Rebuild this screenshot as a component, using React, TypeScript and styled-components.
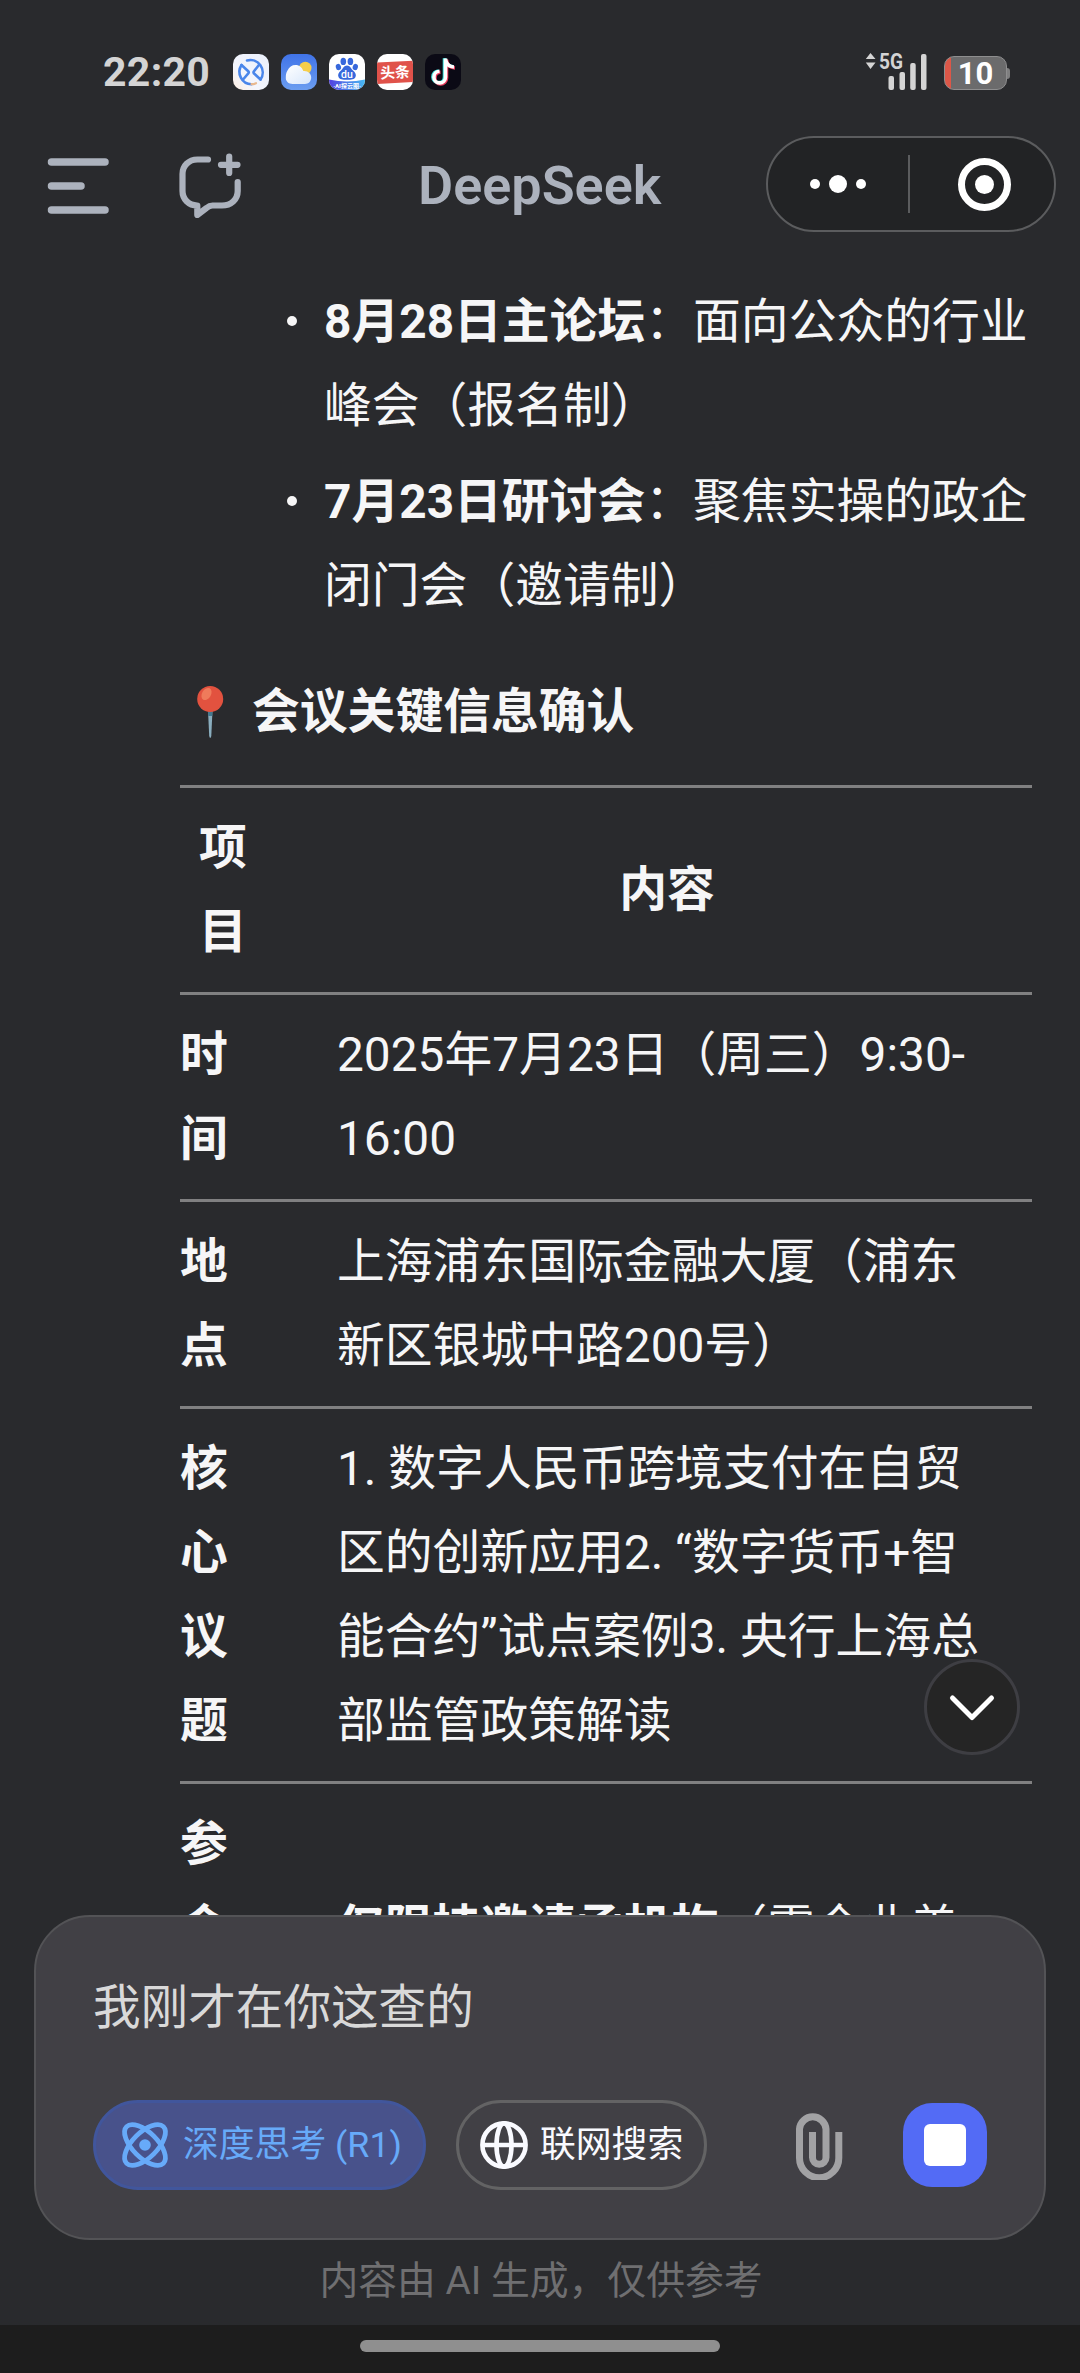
import React from 'react';
import styled, { createGlobalStyle, css } from 'styled-components';

const Global = createGlobalStyle`
  * { box-sizing: border-box; }
  html, body { margin: 0; padding: 0; background: #292a2d; }
  body { font-family: Roboto, "Noto Sans CJK SC", sans-serif; color: #f6f6f7; }
`;

const Screen = styled.div`
  width: 1080px;
  height: 2373px;
  background: #292a2d;
  display: flex;
  flex-direction: column;
  overflow: hidden;
`;

const StatusBar = styled.div`
  flex: none;
  height: 120px;
  padding: 0 70px 0 103px;
  display: flex;
  align-items: flex-start;
`;
const Clock = styled.div`
  width: 130px;
  padding-top: 50px;
  font: 700 41px/44px Roboto, sans-serif;
  letter-spacing: 0.3px;
  color: #d4d4d4;
`;
const AppIcons = styled.div`
  display: flex;
  gap: 12px;
  padding-top: 54px;
  flex: 1;
`;
const AppIcon = styled.svg`
  width: 36px;
  height: 36px;
  border-radius: 10px;
  display: block;
`;
const Signal = styled.svg`
  width: 64px;
  height: 40px;
  margin: 52px 15px 0 0;
  display: block;
  overflow: visible;
`;
const BatteryWrap = styled.div`
  display: flex;
  align-items: center;
  padding-top: 56px;
`;
const Battery = styled.div`
  width: 63px;
  height: 34px;
  border: 1.5px solid #8e8e8f;
  border-radius: 10px;
  background: linear-gradient(90deg, #dc5748 0 6px, #6b6b6c 6px);
  color: #fff;
  text-align: center;
  font: 700 31px/33px Roboto, sans-serif;
`;
const BatteryTip = styled.div`
  width: 3px;
  height: 11px;
  border-radius: 0 3px 3px 0;
  background: #7f7f80;
`;

const Header = styled.header`
  flex: none;
  height: 128px;
  padding: 16px 24px 0 44px;
  display: grid;
  grid-template-columns: 132px 200px 1fr 290px;
  align-items: start;
`;
const HeaderIcon = styled.svg`
  width: 72px;
  height: 96px;
  display: block;
  stroke: #acb2bd;
  fill: none;
  stroke-linecap: round;
  stroke-linejoin: round;
`;
const Title = styled.h1`
  margin: 0;
  padding-left: 42px;
  font: 600 54px/99px Roboto, sans-serif;
  color: #acb2bd;
  white-space: nowrap;
`;
const Capsule = styled.div`
  height: 96px;
  border: 2px solid #5b5c5e;
  border-radius: 48px;
  background: #222325;
  display: flex;
  align-items: center;
`;
const CapsuleHalf = styled.div<{ $shift?: number }>`
  flex: 1;
  display: flex;
  justify-content: center;
  align-items: center;
  gap: 9px;
  padding-left: ${p => p.$shift ?? 0}px;
`;
const Dot = styled.i<{ $size: number }>`
  width: ${p => p.$size}px;
  height: ${p => p.$size}px;
  border-radius: 50%;
  background: #fff;
`;
const Divider = styled.i`
  width: 2px;
  height: 58px;
  background: #5b5c5e;
`;
const Ring = styled.div`
  width: 53px;
  height: 53px;
  border: 7px solid #fff;
  border-radius: 50%;
  display: flex;
  align-items: center;
  justify-content: center;
`;

const Chat = styled.main`
  position: relative;
  flex: none;
  height: 1667px;
  overflow: hidden;
  padding: 32px 48px 0 180px;
  font-size: 47.8px;
  line-height: 84px;
`;
const List = styled.ul`
  list-style: none;
  margin: 0 0 42px;
  padding: 0 0 0 107px;
  display: flex;
  flex-direction: column;
  gap: 12px;
`;
const Item = styled.li`
  display: flex;
  margin-right: -8px;
`;
const Bullet = styled.i`
  flex: none;
  width: 10px;
  height: 10px;
  margin: 36px 27px 0 0;
  border-radius: 50%;
  background: #f6f6f7;
`;
const Heading = styled.h2`
  margin: 0 0 31px;
  padding-left: 15px;
  display: flex;
  align-items: center;
  font-size: 47.8px;
  font-weight: 700;
`;
const Pin = styled.svg`
  width: 30px;
  height: 54px;
  margin-right: 27px;
`;
const Row = styled.div<{ $top?: boolean }>`
  display: grid;
  grid-template-columns: 48px 660px;
  column-gap: 109px;
  align-items: center;
  padding: 18px 0;
  border-top: 3px solid #808081;
  ${p => p.$top && css`
    padding-left: 19px;
    column-gap: 90px;
  `}
`;
const Key = styled.div`
  font-weight: 700;
  word-break: break-all;
`;
const Value = styled.div<{ $center?: boolean }>`
  ${p => p.$center && css`
    text-align: center;
    font-weight: 700;
  `}
`;
const ScrollDown = styled.button`
  position: absolute;
  left: 924px;
  top: 1411px;
  width: 96px;
  height: 96px;
  padding: 0;
  border: 3px solid #3e3e43;
  border-radius: 50%;
  background: #252525;
  display: flex;
  align-items: center;
  justify-content: center;
`;

const Composer = styled.section`
  flex: none;
  height: 325px;
  margin: 0 34px;
  padding: 51px 57px 0 57px;
  border: 2px solid #535356;
  border-radius: 56px;
  background: #414045;
`;
const Draft = styled.div`
  height: 84px;
  font-size: 47.6px;
  line-height: 80px;
  color: #d9d9d9;
`;
const Tools = styled.div`
  display: flex;
  align-items: center;
  margin-top: 48px;
`;
const Chip = styled.button<{ $active?: boolean }>`
  height: 90px;
  width: ${p => (p.$active ? 333 : 251)}px;
  margin-right: 30px;
  padding: 0 0 1px ${p => (p.$active ? 24 : 20)}px;
  display: flex;
  align-items: center;
  border: 3px solid ${p => (p.$active ? '#41569c' : '#636364')};
  border-radius: 45px;
  background: ${p => (p.$active ? '#48528b' : 'transparent')};
  color: ${p => (p.$active ? '#67aaf9' : '#f9faff')};
  font: 400 35.8px/50px Roboto, "Noto Sans CJK SC", sans-serif;
  white-space: nowrap;
  svg { flex: none; margin: 1px ${p => (p.$active ? 13 : 11)}px 0 0; }
`;
const Clip = styled.svg`
  width: 50px;
  height: 70px;
  margin: 0 59px 0 57px;
`;
const Stop = styled.button`
  width: 84px;
  height: 84px;
  padding: 0;
  border: 0;
  border-radius: 29px;
  background: #536bf5;
  display: flex;
  align-items: center;
  justify-content: center;
  &::before {
    content: "";
    width: 42px;
    height: 42px;
    border-radius: 6px;
    background: #fff;
  }
`;
const Note = styled.p`
  flex: none;
  height: 85px;
  margin: 0;
  padding-left: 2px;
  text-align: center;
  font-size: 38.800px;
  line-height: 82px;
  color: #6f6f71;
`;
const NavBar = styled.div`
  flex: none;
  height: 48px;
  background: #1d1d1d;
  display: flex;
  justify-content: center;
  padding-top: 15px;
`;
const Handle = styled.i`
  width: 360px;
  height: 12px;
  border-radius: 6px;
  background: #8f8f8f;
`;

const LinkIcon = () => (
  <AppIcon viewBox="0 0 36 36">
    <defs>
      <linearGradient id="lk" x1="0" y1="1" x2="1" y2="0">
        <stop offset="0" stopColor="#fdeee2" /><stop offset=".35" stopColor="#f4f6fd" /><stop offset="1" stopColor="#e9effb" />
      </linearGradient>
    </defs>
    <rect width="36" height="36" fill="url(#lk)" />
    <g fill="none" stroke="#4a86ea" strokeWidth="2.6" strokeLinecap="round" strokeLinejoin="round">
      <path d="M14 6.500A12.400 12.400 0 0 1 27.500 25.500" />
      <path d="M8.500 11A12.400 12.400 0 0 0 18.500 30.200" />
      <path d="M8.500 11L15.500 17.500Q16.200 18.200 15.500 19.200L10.500 25" />
      <path d="M25.500 11.500L20.800 17.500Q20.200 18.300 20.800 19.200L27.500 25.500" />
    </g>
    <path d="M18.500 30.200a12 12 0 0 0 4.500-1" fill="none" stroke="#e9b98f" strokeWidth="2.2" strokeLinecap="round" />
  </AppIcon>
);
const WeatherIcon = () => (
  <AppIcon viewBox="0 0 36 36">
    <defs>
      <linearGradient id="sky" x1="0" y1="0" x2="0" y2="1"><stop stopColor="#4073e8" /><stop offset="1" stopColor="#6b9df0" /></linearGradient>
      <linearGradient id="cl" x1="0" y1="0" x2="1" y2="1"><stop stopColor="#fff" /><stop offset="1" stopColor="#d7e6fb" /></linearGradient>
    </defs>
    <rect width="36" height="36" fill="url(#sky)" />
    <circle cx="24.3" cy="14" r="6.2" fill="#f6ce4b" />
    <path d="M11.500 30C7.500 30 4.800 27.200 4.800 24C4.800 21 5 18.700 6.500 16.500C8 13 11 11 14.500 11C18.500 11 21 13.500 22.300 17C27 16.500 30.200 19.800 30.200 23.500C30.200 27.200 27.500 30 24 30Z" fill="url(#cl)" />
  </AppIcon>
);
const BaiduIcon = () => (
  <AppIcon viewBox="0 0 36 36">
    <defs>
      <linearGradient id="bd" x1="0" y1="0" x2="1" y2="0"><stop stopColor="#5340e0" /><stop offset="1" stopColor="#47b9f2" /></linearGradient>
    </defs>
    <rect width="36" height="36" fill="#fff" />
    <path d="M0 25.500Q18 29.500 36 25.500V36H0Z" fill="url(#bd)" />
    <g fill="#3768dc">
      <ellipse cx="14.3" cy="7.400" rx="2.800" ry="3.700" />
      <ellipse cx="21.400" cy="7.400" rx="2.800" ry="3.700" />
      <ellipse cx="9.400" cy="13" rx="2.600" ry="3.200" transform="rotate(-15 9.400 13)" />
      <ellipse cx="26.300" cy="13" rx="2.600" ry="3.200" transform="rotate(15 26.300 13)" />
      <path d="M18 11.500C21 11.500 22 14.500 24 16.500C26.500 18.700 27.500 20.500 26.500 23C25.500 25.500 22.500 25.800 18 25.800S10.500 25.500 9.500 23C8.500 20.500 9.500 18.700 12 16.500C14 14.500 15 11.500 18 11.500Z" />
    </g>
    <text x="18" y="24" textAnchor="middle" fontFamily="Roboto" fontWeight="500" fontSize="10.500" fill="#fff">du</text>
    <text x="18" y="34" textAnchor="middle" fontFamily="Roboto, Noto Sans CJK SC" fontWeight="700" fontSize="6" fill="#fff">·AI探云图·</text>
  </AppIcon>
);
const ToutiaoIcon = () => (
  <AppIcon viewBox="0 0 36 36">
    <rect width="36" height="36" fill="#fff" />
    <path d="M0 8.500L36 6.800V28L0 30Z" fill="#e0524a" />
    <text x="18" y="23.800" textAnchor="middle" fontFamily="Noto Sans CJK SC" fontWeight="700" fontSize="14.800" fill="#fff" transform="rotate(-3 18 18)">头条</text>
  </AppIcon>
);
const notePath = 'M20.500 4.500V23.200A5.800 5.800 0 1 1 14.500 17.300M20.500 4.500C20.800 9.500 24 12.700 29 13';
const DouyinIcon = () => (
  <AppIcon viewBox="0 0 36 36">
    <rect width="36" height="36" fill="#0b0a15" />
    <g fill="none" strokeWidth="3.600">
      <path d={notePath} stroke="#3fe0dc" transform="translate(-1 -.3)" />
      <path d={notePath} stroke="#ea3a5c" transform="translate(1 1)" />
      <path d={notePath} stroke="#fff" />
    </g>
  </AppIcon>
);

const rows = [
  ['时间', '2025年7月23日（周三）9:30-16:00'],
  ['地点', '上海浦东国际金融大厦（浦东新区银城中路200号）'],
  ['核心议题', '1. 数字人民币跨境支付在自贸区的创新应用2. “数字货币+智能合约”试点案例3. 央行上海总部监管政策解读'],
];

export default function App() {
  return (
    <Screen>
      <Global />
      <StatusBar>
        <Clock>22:20</Clock>
        <AppIcons>
          <LinkIcon /><WeatherIcon /><BaiduIcon /><ToutiaoIcon /><DouyinIcon />
        </AppIcons>
        <Signal viewBox="0 0 64 40" fill="#d4d4d4">
          <path d="M5.500 1L10.500 7H.8ZM5.500 17L.8 10.500H10.500Z" />
          <text x="14" y="16.500" fontFamily="Roboto" fontWeight="700" fontSize="21.500" textLength="24" lengthAdjust="spacingAndGlyphs">5G</text>
          <rect x="23.500" y="24" width="5.500" height="14" rx="2" />
          <rect x="34.500" y="20" width="5.500" height="18" rx="2" />
          <rect x="45.200" y="11" width="5.500" height="27" rx="2" />
          <rect x="56" y="2" width="5.500" height="36" rx="2" />
        </Signal>
        <BatteryWrap><Battery>10</Battery><BatteryTip /></BatteryWrap>
      </StatusBar>
      <Header>
        <HeaderIcon viewBox="0 0 72 96" strokeWidth="7.500">
          <path d="M7.500 26H61M7.500 50H37M7.500 74H61" />
        </HeaderIcon>
        <HeaderIcon viewBox="0 0 72 96" strokeWidth="6.200">
          <path d="M32 23.500H21.500C12.500 23.500 6.500 30 6.500 38V55C6.500 63 12.500 69.500 21.300 69.500V79L30.500 72C32.500 70.300 34 69.500 36.500 69.500H46C55 69.500 61.700 63.500 61.700 55V46" />
          <path d="M53.200 20.500V37M45 28.800H61.500" />
        </HeaderIcon>
        <Title>DeepSeek</Title>
        <Capsule>
          <CapsuleHalf><Dot $size={10} /><Dot $size={18} /><Dot $size={10} /></CapsuleHalf>
          <Divider />
          <CapsuleHalf $shift={4}><Ring><Dot $size={19} /></Ring></CapsuleHalf>
        </Capsule>
      </Header>
      <Chat>
        <List>
          <Item><Bullet /><div><b>8月28日主论坛</b>：面向公众的行业峰会（报名制）</div></Item>
          <Item><Bullet /><div><b>7月23日研讨会</b>：聚焦实操的政企闭门会（邀请制）</div></Item>
        </List>
        <Heading>
          <Pin viewBox="0 0 30 54">
            <path d="M13 25H17.500L16.300 51Q15.200 55 14.200 51Z" fill="#8aaebf" />
            <path d="M13 25H17.500L17.300 31H13.200Z" fill="#45798f" />
            <circle cx="15.200" cy="14" r="13" fill="#e2523f" />
            <ellipse cx="11.500" cy="9" rx="4.500" ry="6.500" fill="#ef7b5b" transform="rotate(30 11.500 9)" />
          </Pin>
          会议关键信息确认
        </Heading>
        <Row $top><Key>项目</Key><Value $center>内容</Value></Row>
        {rows.map(([k, v]) => <Row key={k}><Key>{k}</Key><Value>{v}</Value></Row>)}
        <Row><Key>参会资格</Key><Value><b>仅限持邀请函机构</b>（需企业盖章）</Value></Row>
        <ScrollDown>
          <svg width="50" height="34" viewBox="0 0 50 34" fill="none" stroke="#fff" strokeWidth="5" strokeLinecap="round" strokeLinejoin="round">
            <path d="M5.500 8L25 27.500L44.500 8" />
          </svg>
        </ScrollDown>
      </Chat>
      <Composer>
        <Draft>我刚才在你这查的</Draft>
        <Tools>
          <Chip $active>
            <svg width="50" height="50" viewBox="0 0 50 50" fill="none" stroke="currentColor" strokeWidth="4.800">
              <ellipse cx="25" cy="25" rx="26" ry="12.500" transform="rotate(45 25 25)" />
              <ellipse cx="25" cy="25" rx="26" ry="12.500" transform="rotate(-45 25 25)" />
              <circle cx="25" cy="25" r="5.800" fill="currentColor" stroke="none" />
            </svg>
            深度思考 (R1)
          </Chip>
          <Chip>
            <svg width="50" height="50" viewBox="0 0 50 50" fill="none" stroke="currentColor" strokeWidth="4.600">
              <circle cx="25" cy="25" r="21.600" />
              <ellipse cx="25" cy="25" rx="7.500" ry="21.600" />
              <path d="M3 25H47" />
            </svg>
            联网搜索
          </Chip>
          <Clip viewBox="0 0 50 70" fill="none" stroke="#a2a2a4" strokeWidth="7">
            <path d="M44.800 22V48A19.600 19.600 0 0 1 5.500 48V19A13.300 13.300 0 0 1 32 19V47.500A6.700 6.700 0 0 1 18.500 47.500V22" />
          </Clip>
          <Stop />
        </Tools>
      </Composer>
      <Note>内容由 AI 生成，仅供参考</Note>
      <NavBar><Handle /></NavBar>
    </Screen>
  );
}
